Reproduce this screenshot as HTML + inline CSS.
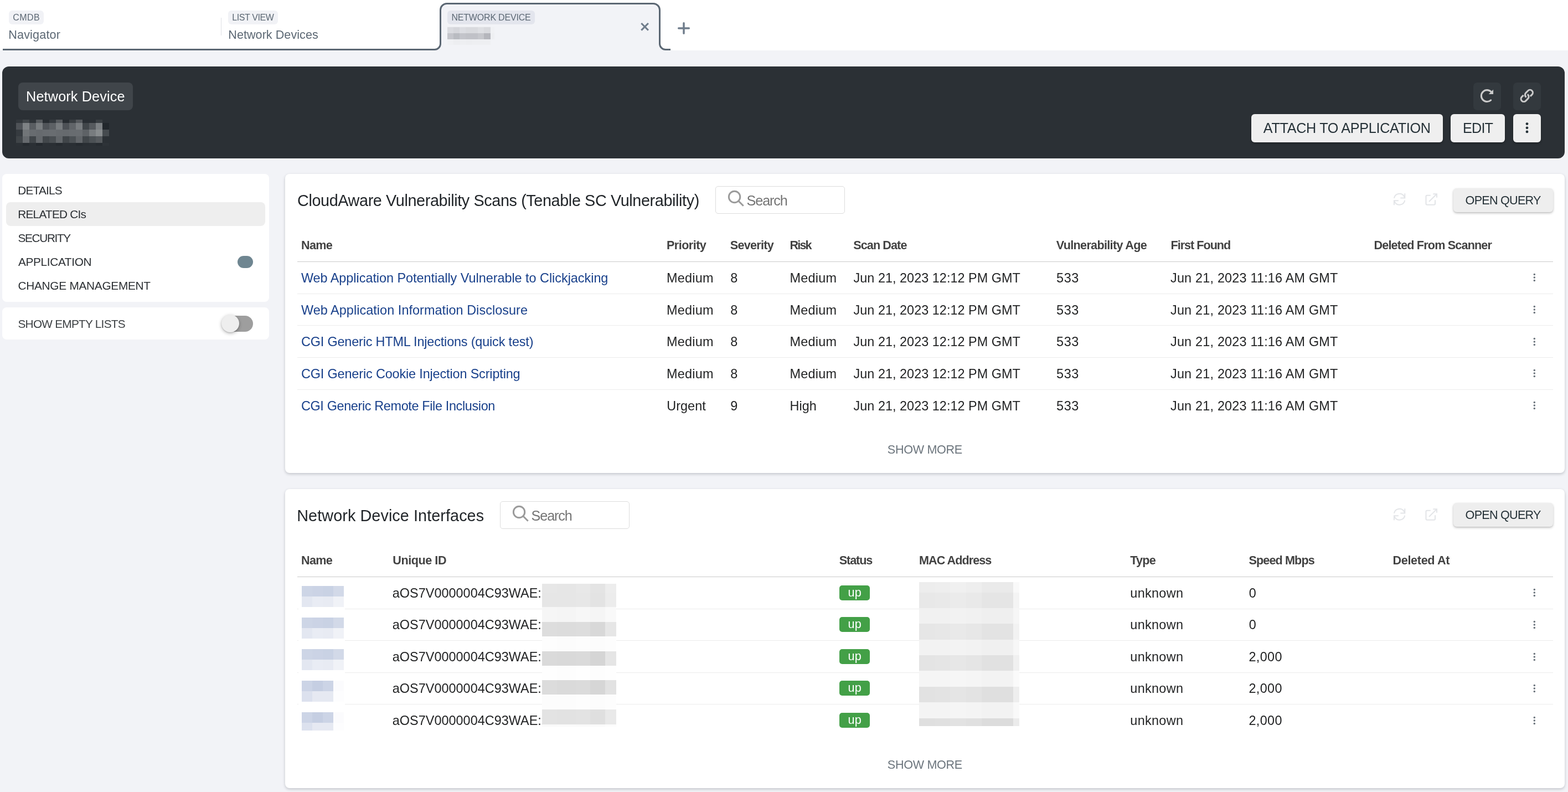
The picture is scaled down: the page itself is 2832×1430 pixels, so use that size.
<!DOCTYPE html>
<html lang="en"><head><meta charset="utf-8"><title>Network Device</title>
<style>
html,body{margin:0;padding:0}
body{width:2832px;height:1430px;overflow:hidden;background:#f2f3f7;font-family:"Liberation Sans",sans-serif;position:relative}
#page div,#page svg.abs,.abs{position:absolute}
#page{position:absolute;left:0;top:0;width:2832px;height:1430px;overflow:hidden;will-change:transform}
.t{position:absolute;white-space:nowrap;line-height:1;display:block}
.card{box-shadow:0 2px 5px rgba(40,44,60,.24)}
</style></head>
<body><main id="page">
<nav class="abs" id="tabs"><div style="left:0px;top:0px;width:2832px;height:91px;background:#fff"></div>
<svg class="abs" style="left:0;top:0" width="1300" height="100" viewBox="0 0 1300 100">
<path d="M785 92 L785 89.5 A10.5 10.5 0 0 0 795.5 79 L795.5 18 A11.5 11.5 0 0 1 807 6.5 L1180 6.5 A11.5 11.5 0 0 1 1191.5 18 L1191.5 79 A10.5 10.5 0 0 0 1202 89.5 L1202 92 Z" fill="#f2f3f7"/>
<path d="M5 89.5 L785 89.5 A10.5 10.5 0 0 0 795.5 79 L795.5 18 A11.5 11.5 0 0 1 807 6.5 L1180 6.5 A11.5 11.5 0 0 1 1191.5 18 L1191.5 79 A10.5 10.5 0 0 0 1202 89.5 L1211 89.5" fill="none" stroke="#5b6773" stroke-width="3"/>
<path d="M1158.3 42 L1170.9 54.6 M1170.9 42 L1158.3 54.6" stroke="#707d8c" stroke-width="3.1" fill="none"/>
<path d="M1225.7 51 L1244.3 51 M1235 41.8 L1235 60.2" stroke="#707d8c" stroke-width="3.5" stroke-linecap="round" fill="none"/>
</svg>
<div style="left:399px;top:32px;width:1px;height:32px;background:#dfe1e6"></div>
<div style="left:16px;top:19px;width:63px;height:25px;background:#f1f2f6;border-radius:6px"></div>
<span class="t" style="left:23.30px;top:24px;font-size:16px;color:#5c6874;letter-spacing:0.417px;">CMDB</span>
<span class="t" style="left:15.25px;top:52px;font-size:21.6px;color:#5c6874;letter-spacing:0.156px;">Navigator</span>
<div style="left:412px;top:19px;width:90px;height:25px;background:#f1f2f6;border-radius:6px"></div>
<span class="t" style="left:419.25px;top:24px;font-size:16px;color:#5c6874;letter-spacing:-0.406px;">LIST VIEW</span>
<span class="t" style="left:412.25px;top:52px;font-size:21.6px;color:#5c6874;letter-spacing:0.036px;">Network Devices</span>
<div style="left:808px;top:19px;width:158px;height:25px;background:#e3e5ed;border-radius:6px"></div>
<span class="t" style="left:815.45px;top:24px;font-size:16px;color:#5c6874;letter-spacing:-0.192px;">NETWORK DEVICE</span>
<svg class="abs" style="left:808.3px;top:47px" width="86" height="35" shape-rendering="crispEdges"><rect x="0.00" y="0.00" width="11.20" height="2.50" fill="#f0f1f4"/><rect x="10.90" y="0.00" width="11.50" height="2.50" fill="#f0f1f4"/><rect x="22.10" y="0.00" width="11.40" height="2.50" fill="#f0f1f4"/><rect x="33.20" y="0.00" width="11.10" height="2.50" fill="#f0f1f4"/><rect x="44.00" y="0.00" width="11.00" height="2.50" fill="#f0f1f4"/><rect x="54.70" y="0.00" width="11.90" height="2.50" fill="#f0f1f4"/><rect x="66.30" y="0.00" width="11.50" height="2.50" fill="#f0f1f4"/><rect x="0.00" y="2.20" width="11.20" height="11.10" fill="#dadbe0"/><rect x="10.90" y="2.20" width="11.50" height="11.10" fill="#d5d6db"/><rect x="22.10" y="2.20" width="11.40" height="11.10" fill="#dcdde2"/><rect x="33.20" y="2.20" width="11.10" height="11.10" fill="#d9dade"/><rect x="44.00" y="2.20" width="11.00" height="11.10" fill="#d9dade"/><rect x="54.70" y="2.20" width="11.90" height="11.10" fill="#dedfe3"/><rect x="66.30" y="2.20" width="11.50" height="11.10" fill="#d9dade"/><rect x="77.50" y="2.20" width="7.50" height="11.10" fill="#f0f1f4"/><rect x="0.00" y="13.00" width="11.20" height="11.10" fill="#c4c5cb"/><rect x="10.90" y="13.00" width="11.50" height="11.10" fill="#b9bbc1"/><rect x="22.10" y="13.00" width="11.40" height="11.10" fill="#c3c4ca"/><rect x="33.20" y="13.00" width="11.10" height="11.10" fill="#c0c1c7"/><rect x="44.00" y="13.00" width="11.00" height="11.10" fill="#c0c1c7"/><rect x="54.70" y="13.00" width="11.90" height="11.10" fill="#c6c7cc"/><rect x="66.30" y="13.00" width="11.50" height="11.10" fill="#b5b6bc"/><rect x="77.50" y="13.00" width="7.50" height="11.10" fill="#eeeff2"/><rect x="0.00" y="23.80" width="11.20" height="10.30" fill="#f0f1f4"/><rect x="10.90" y="23.80" width="11.50" height="10.30" fill="#edeef1"/><rect x="22.10" y="23.80" width="11.40" height="10.30" fill="#eeeff2"/><rect x="33.20" y="23.80" width="11.10" height="10.30" fill="#edeef1"/><rect x="44.00" y="23.80" width="11.00" height="10.30" fill="#eeeff2"/><rect x="54.70" y="23.80" width="11.90" height="10.30" fill="#eeeff2"/><rect x="66.30" y="23.80" width="11.50" height="10.30" fill="#eeeff2"/></svg></nav>
<header class="abs" id="header"><div style="left:4px;top:120px;width:2822px;height:166px;background:#2b3035;border-radius:12px"></div>
<div style="left:33px;top:149px;width:207px;height:50px;background:#40454a;border-radius:8px"></div>
<span class="t" style="left:47.10px;top:162px;font-size:25.2px;color:#fff;letter-spacing:0.162px;">Network Device</span>
<svg class="abs" style="left:29px;top:216px" width="169" height="48" shape-rendering="crispEdges"><rect x="0.00" y="0.00" width="12.30" height="6.30" fill="#32373c"/><rect x="12.00" y="0.00" width="12.30" height="6.30" fill="#42474b"/><rect x="24.00" y="0.00" width="12.30" height="6.30" fill="#2f3439"/><rect x="36.00" y="0.00" width="12.30" height="6.30" fill="#575b5f"/><rect x="48.00" y="0.00" width="12.30" height="6.30" fill="#282d32"/><rect x="60.00" y="0.00" width="12.30" height="6.30" fill="#353a3f"/><rect x="72.00" y="0.00" width="12.30" height="6.30" fill="#565a5e"/><rect x="84.00" y="0.00" width="12.30" height="6.30" fill="#272c31"/><rect x="96.00" y="0.00" width="12.30" height="6.30" fill="#3a3f43"/><rect x="108.00" y="0.00" width="12.30" height="6.30" fill="#55595d"/><rect x="120.00" y="0.00" width="12.30" height="6.30" fill="#292e33"/><rect x="132.00" y="0.00" width="12.30" height="6.30" fill="#2a2f34"/><rect x="144.00" y="0.00" width="12.30" height="6.30" fill="#393e42"/><rect x="0.00" y="6.00" width="12.30" height="12.30" fill="#4e5257"/><rect x="12.00" y="6.00" width="12.30" height="12.30" fill="#7e8285"/><rect x="24.00" y="6.00" width="12.30" height="12.30" fill="#5a5e62"/><rect x="36.00" y="6.00" width="12.30" height="12.30" fill="#797d80"/><rect x="48.00" y="6.00" width="12.30" height="12.30" fill="#505459"/><rect x="60.00" y="6.00" width="12.30" height="12.30" fill="#5d6165"/><rect x="72.00" y="6.00" width="12.30" height="12.30" fill="#787c7f"/><rect x="84.00" y="6.00" width="12.30" height="12.30" fill="#4d5156"/><rect x="96.00" y="6.00" width="12.30" height="12.30" fill="#616569"/><rect x="108.00" y="6.00" width="12.30" height="12.30" fill="#797d80"/><rect x="120.00" y="6.00" width="12.30" height="12.30" fill="#41464a"/><rect x="132.00" y="6.00" width="12.30" height="12.30" fill="#565a5e"/><rect x="144.00" y="6.00" width="12.30" height="12.30" fill="#7c8083"/><rect x="156.00" y="6.00" width="12.30" height="12.30" fill="#22272c"/><rect x="0.00" y="18.00" width="12.30" height="12.30" fill="#363b40"/><rect x="12.00" y="18.00" width="12.30" height="12.30" fill="#717578"/><rect x="24.00" y="18.00" width="12.30" height="12.30" fill="#686c70"/><rect x="36.00" y="18.00" width="12.30" height="12.30" fill="#666a6e"/><rect x="48.00" y="18.00" width="12.30" height="12.30" fill="#686c70"/><rect x="60.00" y="18.00" width="12.30" height="12.30" fill="#696d71"/><rect x="72.00" y="18.00" width="12.30" height="12.30" fill="#676b6f"/><rect x="84.00" y="18.00" width="12.30" height="12.30" fill="#666a6e"/><rect x="96.00" y="18.00" width="12.30" height="12.30" fill="#686c70"/><rect x="108.00" y="18.00" width="12.30" height="12.30" fill="#696d71"/><rect x="120.00" y="18.00" width="12.30" height="12.30" fill="#5e6266"/><rect x="132.00" y="18.00" width="12.30" height="12.30" fill="#787c7f"/><rect x="144.00" y="18.00" width="12.30" height="12.30" fill="#888c8e"/><rect x="156.00" y="18.00" width="12.30" height="12.30" fill="#464b4f"/><rect x="0.00" y="30.00" width="12.30" height="12.30" fill="#3f4448"/><rect x="12.00" y="30.00" width="12.30" height="12.30" fill="#666a6e"/><rect x="24.00" y="30.00" width="12.30" height="12.30" fill="#404549"/><rect x="36.00" y="30.00" width="12.30" height="12.30" fill="#64686c"/><rect x="48.00" y="30.00" width="12.30" height="12.30" fill="#42474b"/><rect x="60.00" y="30.00" width="12.30" height="12.30" fill="#4a4f53"/><rect x="72.00" y="30.00" width="12.30" height="12.30" fill="#62666a"/><rect x="84.00" y="30.00" width="12.30" height="12.30" fill="#404549"/><rect x="96.00" y="30.00" width="12.30" height="12.30" fill="#4c5155"/><rect x="108.00" y="30.00" width="12.30" height="12.30" fill="#616569"/><rect x="120.00" y="30.00" width="12.30" height="12.30" fill="#41464a"/><rect x="132.00" y="30.00" width="12.30" height="12.30" fill="#4c5155"/><rect x="144.00" y="30.00" width="12.30" height="12.30" fill="#565a5e"/><rect x="0.00" y="42.00" width="12.30" height="5.30" fill="#2c3136"/><rect x="12.00" y="42.00" width="12.30" height="5.30" fill="#252a2f"/><rect x="36.00" y="42.00" width="12.30" height="5.30" fill="#24292e"/><rect x="60.00" y="42.00" width="12.30" height="5.30" fill="#2a2f34"/><rect x="72.00" y="42.00" width="12.30" height="5.30" fill="#252a2f"/><rect x="96.00" y="42.00" width="12.30" height="5.30" fill="#2a2f34"/><rect x="108.00" y="42.00" width="12.30" height="5.30" fill="#252a2f"/><rect x="120.00" y="42.00" width="12.30" height="5.30" fill="#292e33"/><rect x="132.00" y="42.00" width="12.30" height="5.30" fill="#2a2f34"/><rect x="144.00" y="42.00" width="12.30" height="5.30" fill="#262b30"/><rect x="156.00" y="42.00" width="12.30" height="5.30" fill="#2e3338"/></svg>
<div style="left:2661px;top:149px;width:50px;height:50px;background:#33393e;border-radius:7px"></div>
<div style="left:2733px;top:149px;width:50px;height:50px;background:#33393e;border-radius:7px"></div>
<svg class="abs" style="left:2661px;top:149px" width="50" height="50" viewBox="0 0 50 50">
<g transform="translate(24.76 24.06)"><path d="M7.35 -7.35 A10.4 10.4 0 1 0 6.9 7.8" fill="none" stroke="#cbcbcb" stroke-width="3.1" stroke-linecap="round"/>
<path d="M11.3 -11.4 L11.3 -3 L3 -3 Z" fill="#cbcbcb"/></g></svg>
<svg class="abs" style="left:2733px;top:149px" width="50" height="50" viewBox="0 0 50 50">
<g transform="translate(24.75 23.9) rotate(-45)" fill="none" stroke="#cbcbcb" stroke-width="3.1"><path d="M3.6 5.05 L7.9 5.05 A5.05 5.05 0 0 0 7.9 -5.05 L2.45 -5.05 A5.05 5.05 0 0 0 -2.5 1.1"/><path d="M3.6 5.05 L7.9 5.05 A5.05 5.05 0 0 0 7.9 -5.05 L2.45 -5.05 A5.05 5.05 0 0 0 -2.5 1.1" transform="rotate(180)"/></g></svg>
<div style="left:2260px;top:206px;width:346px;height:51px;background:#efefef;border-radius:6px;box-shadow:0 2px 4px rgba(0,0,0,.3)"></div>
<span class="t" style="left:2281.80px;top:219px;font-size:25.2px;color:#263238;letter-spacing:-0.312px;">ATTACH TO APPLICATION</span>
<div style="left:2620px;top:206px;width:98px;height:51px;background:#efefef;border-radius:6px;box-shadow:0 2px 4px rgba(0,0,0,.3)"></div>
<span class="t" style="left:2642.10px;top:219px;font-size:25.2px;color:#263238;letter-spacing:-0.850px;">EDIT</span>
<div style="left:2733px;top:206px;width:50px;height:51px;background:#efefef;border-radius:6px;box-shadow:0 2px 4px rgba(0,0,0,.3)"></div>
<svg class="abs" style="left:2733px;top:206px" width="50" height="51"><g fill="#263238"><circle cx="25" cy="17.6" r="2.4"/><circle cx="25" cy="24.8" r="2.4"/><circle cx="25" cy="31.9" r="2.4"/></g></svg></header>
<aside class="abs" id="sidebar"><div class="scard" style="left:4px;top:314px;width:482px;height:231px;background:#fff;border-radius:8px"></div>
<div style="left:11px;top:365px;width:468px;height:43px;background:#eeeeee;border-radius:8px"></div>
<span class="t" style="left:32.25px;top:334px;font-size:20.8px;color:#2b2f33;letter-spacing:-0.800px;">DETAILS</span>
<span class="t" style="left:32.25px;top:377px;font-size:20.8px;color:#2b2f33;letter-spacing:-0.770px;">RELATED CIs</span>
<span class="t" style="left:32.50px;top:420px;font-size:20.8px;color:#2b2f33;letter-spacing:-1.350px;">SECURITY</span>
<span class="t" style="left:33.00px;top:463px;font-size:20.8px;color:#2b2f33;letter-spacing:-0.350px;">APPLICATION</span>
<span class="t" style="left:32.50px;top:506px;font-size:20.8px;color:#2b2f33;letter-spacing:-0.266px;">CHANGE MANAGEMENT</span>
<div style="left:429px;top:462px;width:28px;height:22px;background:#6f8691;border-radius:11px"></div>
<div class="scard" style="left:4px;top:555px;width:482px;height:58px;background:#fff;border-radius:8px"></div>
<span class="t" style="left:32.50px;top:575px;font-size:20.8px;color:#3c4043;letter-spacing:-0.747px;">SHOW EMPTY LISTS</span>
<div style="left:409px;top:570px;width:48px;height:29px;background:#9e9e9e;border-radius:14.5px"></div>
<div style="left:400px;top:568px;width:32px;height:32px;background:#eeeeee;border-radius:50%;box-shadow:0 2px 6px rgba(0,0,0,.28), 0 1px 2px rgba(0,0,0,.15)"></div></aside>
<section class="abs" id="card1"><div class="card" style="left:515px;top:314px;width:2311px;height:540px;background:#fff;border-radius:8px"></div>
<span class="t" style="left:537.00px;top:348px;font-size:28.8px;color:#212529;letter-spacing:-0.388px;">CloudAware Vulnerability Scans (Tenable SC Vulnerability)</span>
<div style="left:1292px;top:336px;width:234px;height:50px;border:1px solid #dcdcdc;border-radius:5px;box-sizing:border-box;background:#fff"></div>
<svg class="abs" style="left:1312px;top:339px" width="40" height="40"><g fill="none" stroke="#9b9b9b" stroke-width="3"><circle cx="14.55" cy="16.5" r="10.2"/><path d="M21.7 23.7 L30.7 32.7"/></g></svg>
<span class="t" style="left:1348.55px;top:350px;font-size:25.2px;color:#757575;letter-spacing:-1.100px;">Search</span>
<svg class="abs" style="left:2510px;top:340px" width="36" height="36"><g transform="translate(17.6 19.8)" fill="none" stroke="#e3e5e8" stroke-width="2">
<path d="M-9.7 -1.9 A9.9 9.9 0 0 1 8.3 -5.4 L9.7 -2.3 M9.7 -10.5 L9.7 -2.4 L1.7 -2.4"/>
<path d="M9.7 1.9 A9.9 9.9 0 0 1 -8.3 5.4 L-9.7 2.3 M-9.7 10.5 L-9.7 2.4 L-1.7 2.4"/></g></svg>
<svg class="abs" style="left:2570px;top:346px" width="36" height="36"><g fill="none" stroke="#e3e5e8" stroke-width="2.1">
<path d="M13.8 6.8 L7.5 6.8 A2 2 0 0 0 5.5 8.8 L5.5 21.8 A2 2 0 0 0 7.5 23.8 L20 23.8 A2 2 0 0 0 22 21.8 L22 15.2"/>
<path d="M11 18 L25 4.2 M18.3 4.2 L25 4.2 L25 10.8"/></g></svg>
<div style="left:2625px;top:340px;width:180px;height:43px;background:#eeeeee;border-radius:6px;box-shadow:0 2px 4px rgba(0,0,0,.22), 0 1px 2px rgba(0,0,0,.08)"></div>
<span class="t" style="left:2646.60px;top:351px;font-size:21.6px;color:#263238;letter-spacing:-0.750px;">OPEN QUERY</span>
<span class="t" style="left:544.00px;top:432px;font-size:21.6px;color:#424242;letter-spacing:-0.667px;font-weight:700;">Name</span>
<span class="t" style="left:1204.00px;top:432px;font-size:21.6px;color:#424242;letter-spacing:-0.536px;font-weight:700;">Priority</span>
<span class="t" style="left:1318.75px;top:432px;font-size:21.6px;color:#424242;letter-spacing:-0.714px;font-weight:700;">Severity</span>
<span class="t" style="left:1426.50px;top:432px;font-size:21.6px;color:#424242;letter-spacing:-1.833px;font-weight:700;">Risk</span>
<span class="t" style="left:1541.25px;top:432px;font-size:21.6px;color:#424242;letter-spacing:-0.906px;font-weight:700;">Scan Date</span>
<span class="t" style="left:1907.75px;top:432px;font-size:21.6px;color:#424242;letter-spacing:-0.672px;font-weight:700;">Vulnerability Age</span>
<span class="t" style="left:2114.50px;top:432px;font-size:21.6px;color:#424242;letter-spacing:-1.000px;font-weight:700;">First Found</span>
<span class="t" style="left:2481.50px;top:432px;font-size:21.6px;color:#424242;letter-spacing:-0.829px;font-weight:700;">Deleted From Scanner</span>
<div style="left:537px;top:472px;width:2268px;height:1px;background:#cacaca"></div>
<span class="t" style="left:543.95px;top:491px;font-size:23.4px;color:#173f8a;letter-spacing:-0.014px;">Web Application Potentially Vulnerable to Clickjacking</span>
<span class="t" style="left:1204.00px;top:491px;font-size:23.4px;color:#222324;letter-spacing:0.250px;">Medium</span>
<span class="t" style="left:1319.30px;top:491px;font-size:23.4px;color:#222324;">8</span>
<span class="t" style="left:1426.50px;top:491px;font-size:23.4px;color:#222324;letter-spacing:0.250px;">Medium</span>
<span class="t" style="left:1541.50px;top:491px;font-size:23.4px;color:#222324;letter-spacing:0.042px;">Jun 21, 2023 12:12 PM GMT</span>
<span class="t" style="left:1908.00px;top:491px;font-size:23.4px;color:#222324;letter-spacing:0.625px;">533</span>
<span class="t" style="left:2114.00px;top:491px;font-size:23.4px;color:#222324;letter-spacing:0.208px;">Jun 21, 2023 11:16 AM GMT</span>
<svg class="abs" style="left:2762px;top:492.3px" width="18" height="18"><g fill="#6c757d"><circle cx="9.3" cy="3.5" r="1.75"/><circle cx="9.3" cy="9" r="1.75"/><circle cx="9.3" cy="14.5" r="1.75"/></g></svg>
<div style="left:537px;top:530px;width:2268px;height:1px;background:#ececec"></div>
<span class="t" style="left:543.95px;top:549px;font-size:23.4px;color:#173f8a;letter-spacing:0.068px;">Web Application Information Disclosure</span>
<span class="t" style="left:1204.00px;top:549px;font-size:23.4px;color:#222324;letter-spacing:0.250px;">Medium</span>
<span class="t" style="left:1319.30px;top:549px;font-size:23.4px;color:#222324;">8</span>
<span class="t" style="left:1426.50px;top:549px;font-size:23.4px;color:#222324;letter-spacing:0.250px;">Medium</span>
<span class="t" style="left:1541.50px;top:549px;font-size:23.4px;color:#222324;letter-spacing:0.042px;">Jun 21, 2023 12:12 PM GMT</span>
<span class="t" style="left:1908.00px;top:549px;font-size:23.4px;color:#222324;letter-spacing:0.625px;">533</span>
<span class="t" style="left:2114.00px;top:549px;font-size:23.4px;color:#222324;letter-spacing:0.208px;">Jun 21, 2023 11:16 AM GMT</span>
<svg class="abs" style="left:2762px;top:549.9px" width="18" height="18"><g fill="#6c757d"><circle cx="9.3" cy="3.5" r="1.75"/><circle cx="9.3" cy="9" r="1.75"/><circle cx="9.3" cy="14.5" r="1.75"/></g></svg>
<div style="left:537px;top:587px;width:2268px;height:1px;background:#ececec"></div>
<span class="t" style="left:543.95px;top:606px;font-size:23.4px;color:#173f8a;letter-spacing:-0.154px;">CGI Generic HTML Injections (quick test)</span>
<span class="t" style="left:1204.00px;top:606px;font-size:23.4px;color:#222324;letter-spacing:0.250px;">Medium</span>
<span class="t" style="left:1319.30px;top:606px;font-size:23.4px;color:#222324;">8</span>
<span class="t" style="left:1426.50px;top:606px;font-size:23.4px;color:#222324;letter-spacing:0.250px;">Medium</span>
<span class="t" style="left:1541.50px;top:606px;font-size:23.4px;color:#222324;letter-spacing:0.042px;">Jun 21, 2023 12:12 PM GMT</span>
<span class="t" style="left:1908.00px;top:606px;font-size:23.4px;color:#222324;letter-spacing:0.625px;">533</span>
<span class="t" style="left:2114.00px;top:606px;font-size:23.4px;color:#222324;letter-spacing:0.208px;">Jun 21, 2023 11:16 AM GMT</span>
<svg class="abs" style="left:2762px;top:607.5px" width="18" height="18"><g fill="#6c757d"><circle cx="9.3" cy="3.5" r="1.75"/><circle cx="9.3" cy="9" r="1.75"/><circle cx="9.3" cy="14.5" r="1.75"/></g></svg>
<div style="left:537px;top:645px;width:2268px;height:1px;background:#ececec"></div>
<span class="t" style="left:543.95px;top:664px;font-size:23.4px;color:#173f8a;letter-spacing:-0.128px;">CGI Generic Cookie Injection Scripting</span>
<span class="t" style="left:1204.00px;top:664px;font-size:23.4px;color:#222324;letter-spacing:0.250px;">Medium</span>
<span class="t" style="left:1319.30px;top:664px;font-size:23.4px;color:#222324;">8</span>
<span class="t" style="left:1426.50px;top:664px;font-size:23.4px;color:#222324;letter-spacing:0.250px;">Medium</span>
<span class="t" style="left:1541.50px;top:664px;font-size:23.4px;color:#222324;letter-spacing:0.042px;">Jun 21, 2023 12:12 PM GMT</span>
<span class="t" style="left:1908.00px;top:664px;font-size:23.4px;color:#222324;letter-spacing:0.625px;">533</span>
<span class="t" style="left:2114.00px;top:664px;font-size:23.4px;color:#222324;letter-spacing:0.208px;">Jun 21, 2023 11:16 AM GMT</span>
<svg class="abs" style="left:2762px;top:665.1px" width="18" height="18"><g fill="#6c757d"><circle cx="9.3" cy="3.5" r="1.75"/><circle cx="9.3" cy="9" r="1.75"/><circle cx="9.3" cy="14.5" r="1.75"/></g></svg>
<div style="left:537px;top:703px;width:2268px;height:1px;background:#ececec"></div>
<span class="t" style="left:543.95px;top:722px;font-size:23.4px;color:#173f8a;letter-spacing:-0.344px;">CGI Generic Remote File Inclusion</span>
<span class="t" style="left:1204.25px;top:722px;font-size:23.4px;color:#222324;letter-spacing:0.050px;">Urgent</span>
<span class="t" style="left:1319.30px;top:722px;font-size:23.4px;color:#222324;">9</span>
<span class="t" style="left:1426.50px;top:722px;font-size:23.4px;color:#222324;letter-spacing:0.083px;">High</span>
<span class="t" style="left:1541.50px;top:722px;font-size:23.4px;color:#222324;letter-spacing:0.042px;">Jun 21, 2023 12:12 PM GMT</span>
<span class="t" style="left:1908.00px;top:722px;font-size:23.4px;color:#222324;letter-spacing:0.625px;">533</span>
<span class="t" style="left:2114.00px;top:722px;font-size:23.4px;color:#222324;letter-spacing:0.208px;">Jun 21, 2023 11:16 AM GMT</span>
<svg class="abs" style="left:2762px;top:722.7px" width="18" height="18"><g fill="#6c757d"><circle cx="9.3" cy="3.5" r="1.75"/><circle cx="9.3" cy="9" r="1.75"/><circle cx="9.3" cy="14.5" r="1.75"/></g></svg>

<span class="t" style="left:1602.80px;top:801px;font-size:21.6px;color:#6c757d;letter-spacing:-0.312px;">SHOW MORE</span></section>
<section class="abs" id="card2"><div class="card" style="left:515px;top:883px;width:2311px;height:540px;background:#fff;border-radius:8px"></div>
<span class="t" style="left:536.25px;top:917px;font-size:28.8px;color:#212529;letter-spacing:0.073px;">Network Device Interfaces</span>
<div style="left:903px;top:905px;width:234px;height:50px;border:1px solid #dcdcdc;border-radius:5px;box-sizing:border-box;background:#fff"></div>
<svg class="abs" style="left:923px;top:908px" width="40" height="40"><g fill="none" stroke="#9b9b9b" stroke-width="3"><circle cx="14.55" cy="16.5" r="10.2"/><path d="M21.7 23.7 L30.7 32.7"/></g></svg>
<span class="t" style="left:959.55px;top:919px;font-size:25.2px;color:#757575;letter-spacing:-1.100px;">Search</span>
<svg class="abs" style="left:2510px;top:909px" width="36" height="36"><g transform="translate(17.6 19.8)" fill="none" stroke="#e3e5e8" stroke-width="2">
<path d="M-9.7 -1.9 A9.9 9.9 0 0 1 8.3 -5.4 L9.7 -2.3 M9.7 -10.5 L9.7 -2.4 L1.7 -2.4"/>
<path d="M9.7 1.9 A9.9 9.9 0 0 1 -8.3 5.4 L-9.7 2.3 M-9.7 10.5 L-9.7 2.4 L-1.7 2.4"/></g></svg>
<svg class="abs" style="left:2570px;top:915px" width="36" height="36"><g fill="none" stroke="#e3e5e8" stroke-width="2.1">
<path d="M13.8 6.8 L7.5 6.8 A2 2 0 0 0 5.5 8.8 L5.5 21.8 A2 2 0 0 0 7.5 23.8 L20 23.8 A2 2 0 0 0 22 21.8 L22 15.2"/>
<path d="M11 18 L25 4.2 M18.3 4.2 L25 4.2 L25 10.8"/></g></svg>
<div style="left:2625px;top:908px;width:180px;height:43px;background:#eeeeee;border-radius:6px;box-shadow:0 2px 4px rgba(0,0,0,.22), 0 1px 2px rgba(0,0,0,.08)"></div>
<span class="t" style="left:2646.60px;top:919px;font-size:21.6px;color:#263238;letter-spacing:-0.750px;">OPEN QUERY</span>
<span class="t" style="left:544.00px;top:1001px;font-size:21.6px;color:#424242;letter-spacing:-0.667px;font-weight:700;">Name</span>
<span class="t" style="left:709.25px;top:1001px;font-size:21.6px;color:#424242;letter-spacing:-0.438px;font-weight:700;">Unique ID</span>
<span class="t" style="left:1515.75px;top:1001px;font-size:21.6px;color:#424242;letter-spacing:-1.100px;font-weight:700;">Status</span>
<span class="t" style="left:1660.00px;top:1001px;font-size:21.6px;color:#424242;letter-spacing:-0.950px;font-weight:700;">MAC Address</span>
<span class="t" style="left:2041.25px;top:1001px;font-size:21.6px;color:#424242;letter-spacing:-0.750px;font-weight:700;">Type</span>
<span class="t" style="left:2255.55px;top:1001px;font-size:21.6px;color:#424242;letter-spacing:-0.889px;font-weight:700;">Speed Mbps</span>
<span class="t" style="left:2515.50px;top:1001px;font-size:21.6px;color:#424242;letter-spacing:-0.333px;font-weight:700;">Deleted At</span>
<div style="left:537px;top:1041px;width:2268px;height:1px;background:#cacaca"></div>
<span class="t" style="left:708.80px;top:1060px;font-size:23.4px;color:#222324;letter-spacing:0.042px;">aOS7V0000004C93WAE:</span>
<span class="t" style="left:2041.30px;top:1060px;font-size:23.4px;color:#222324;letter-spacing:0.333px;">unknown</span>
<span class="t" style="left:2255.70px;top:1060px;font-size:23.4px;color:#222324;">0</span>
<svg class="abs" style="left:2762px;top:1061.3px" width="18" height="18"><g fill="#6c757d"><circle cx="9.3" cy="3.5" r="1.75"/><circle cx="9.3" cy="9" r="1.75"/><circle cx="9.3" cy="14.5" r="1.75"/></g></svg>
<div style="left:537px;top:1099px;width:2268px;height:1px;background:#ececec"></div>
<span class="t" style="left:708.80px;top:1117px;font-size:23.4px;color:#222324;letter-spacing:0.042px;">aOS7V0000004C93WAE:</span>
<span class="t" style="left:2041.30px;top:1117px;font-size:23.4px;color:#222324;letter-spacing:0.333px;">unknown</span>
<span class="t" style="left:2255.70px;top:1117px;font-size:23.4px;color:#222324;">0</span>
<svg class="abs" style="left:2762px;top:1118.9px" width="18" height="18"><g fill="#6c757d"><circle cx="9.3" cy="3.5" r="1.75"/><circle cx="9.3" cy="9" r="1.75"/><circle cx="9.3" cy="14.5" r="1.75"/></g></svg>
<div style="left:537px;top:1156px;width:2268px;height:1px;background:#ececec"></div>
<span class="t" style="left:708.80px;top:1175px;font-size:23.4px;color:#222324;letter-spacing:0.042px;">aOS7V0000004C93WAE:</span>
<span class="t" style="left:2041.30px;top:1175px;font-size:23.4px;color:#222324;letter-spacing:0.333px;">unknown</span>
<span class="t" style="left:2255.45px;top:1175px;font-size:23.4px;color:#222324;letter-spacing:0.375px;">2,000</span>
<svg class="abs" style="left:2762px;top:1176.5px" width="18" height="18"><g fill="#6c757d"><circle cx="9.3" cy="3.5" r="1.75"/><circle cx="9.3" cy="9" r="1.75"/><circle cx="9.3" cy="14.5" r="1.75"/></g></svg>
<div style="left:537px;top:1214px;width:2268px;height:1px;background:#ececec"></div>
<span class="t" style="left:708.80px;top:1232px;font-size:23.4px;color:#222324;letter-spacing:0.042px;">aOS7V0000004C93WAE:</span>
<span class="t" style="left:2041.30px;top:1232px;font-size:23.4px;color:#222324;letter-spacing:0.333px;">unknown</span>
<span class="t" style="left:2255.45px;top:1232px;font-size:23.4px;color:#222324;letter-spacing:0.375px;">2,000</span>
<svg class="abs" style="left:2762px;top:1234.1px" width="18" height="18"><g fill="#6c757d"><circle cx="9.3" cy="3.5" r="1.75"/><circle cx="9.3" cy="9" r="1.75"/><circle cx="9.3" cy="14.5" r="1.75"/></g></svg>
<div style="left:537px;top:1271px;width:2268px;height:1px;background:#ececec"></div>
<span class="t" style="left:708.80px;top:1290px;font-size:23.4px;color:#222324;letter-spacing:0.042px;">aOS7V0000004C93WAE:</span>
<span class="t" style="left:2041.30px;top:1290px;font-size:23.4px;color:#222324;letter-spacing:0.333px;">unknown</span>
<span class="t" style="left:2255.45px;top:1290px;font-size:23.4px;color:#222324;letter-spacing:0.375px;">2,000</span>
<svg class="abs" style="left:2762px;top:1291.7px" width="18" height="18"><g fill="#6c757d"><circle cx="9.3" cy="3.5" r="1.75"/><circle cx="9.3" cy="9" r="1.75"/><circle cx="9.3" cy="14.5" r="1.75"/></g></svg>
<div style="left:1516px;top:1057px;width:55px;height:27px;background:#43a047;border-radius:5px"></div>
<span class="t" style="left:1531.50px;top:1059px;font-size:21.6px;color:#fff;letter-spacing:0.250px;">up</span>
<div style="left:1516px;top:1114px;width:55px;height:27px;background:#43a047;border-radius:5px"></div>
<span class="t" style="left:1531.50px;top:1116px;font-size:21.6px;color:#fff;letter-spacing:0.250px;">up</span>
<div style="left:1516px;top:1172px;width:55px;height:27px;background:#43a047;border-radius:5px"></div>
<span class="t" style="left:1531.50px;top:1174px;font-size:21.6px;color:#fff;letter-spacing:0.250px;">up</span>
<div style="left:1516px;top:1229px;width:55px;height:27px;background:#43a047;border-radius:5px"></div>
<span class="t" style="left:1531.50px;top:1231px;font-size:21.6px;color:#fff;letter-spacing:0.250px;">up</span>
<div style="left:1516px;top:1287px;width:55px;height:27px;background:#43a047;border-radius:5px"></div>
<span class="t" style="left:1531.50px;top:1289px;font-size:21.6px;color:#fff;letter-spacing:0.250px;">up</span>
<div style="left:539px;top:1043px;width:84px;height:280px;background:#fff"></div>
<svg class="abs" style="left:545px;top:1058px" width="96" height="39" shape-rendering="crispEdges"><rect x="0.00" y="0.00" width="19.30" height="19.30" fill="#cdd5e6"/><rect x="19.00" y="0.00" width="19.30" height="19.30" fill="#cbd3e5"/><rect x="38.00" y="0.00" width="19.30" height="19.30" fill="#c9d2e4"/><rect x="57.00" y="0.00" width="19.30" height="19.30" fill="#d2d9e8"/><rect x="0.00" y="19.00" width="19.30" height="19.30" fill="#e3e7f1"/><rect x="19.00" y="19.00" width="19.30" height="19.30" fill="#e9ecf4"/><rect x="38.00" y="19.00" width="19.30" height="19.30" fill="#e8ebf3"/><rect x="57.00" y="19.00" width="19.30" height="19.30" fill="#f0f2f7"/></svg>
<svg class="abs" style="left:545px;top:1115px" width="96" height="39" shape-rendering="crispEdges"><rect x="0.00" y="0.00" width="19.30" height="19.30" fill="#cdd5e6"/><rect x="19.00" y="0.00" width="19.30" height="19.30" fill="#cbd3e5"/><rect x="38.00" y="0.00" width="19.30" height="19.30" fill="#c9d2e4"/><rect x="57.00" y="0.00" width="19.30" height="19.30" fill="#d2d9e8"/><rect x="0.00" y="19.00" width="19.30" height="19.30" fill="#e3e7f1"/><rect x="19.00" y="19.00" width="19.30" height="19.30" fill="#e9ecf4"/><rect x="38.00" y="19.00" width="19.30" height="19.30" fill="#e8ebf3"/><rect x="57.00" y="19.00" width="19.30" height="19.30" fill="#f0f2f7"/></svg>
<svg class="abs" style="left:545px;top:1172px" width="96" height="39" shape-rendering="crispEdges"><rect x="0.00" y="0.00" width="19.30" height="19.30" fill="#cdd5e6"/><rect x="19.00" y="0.00" width="19.30" height="19.30" fill="#cbd3e5"/><rect x="38.00" y="0.00" width="19.30" height="19.30" fill="#c9d2e4"/><rect x="57.00" y="0.00" width="19.30" height="19.30" fill="#d2d9e8"/><rect x="0.00" y="19.00" width="19.30" height="19.30" fill="#e3e7f1"/><rect x="19.00" y="19.00" width="19.30" height="19.30" fill="#e9ecf4"/><rect x="38.00" y="19.00" width="19.30" height="19.30" fill="#e8ebf3"/><rect x="57.00" y="19.00" width="19.30" height="19.30" fill="#f0f2f7"/></svg>
<svg class="abs" style="left:545px;top:1229px" width="77" height="39" shape-rendering="crispEdges"><rect x="0.00" y="0.00" width="19.30" height="19.30" fill="#ccd4e6"/><rect x="19.00" y="0.00" width="19.30" height="19.30" fill="#c5cee2"/><rect x="38.00" y="0.00" width="19.30" height="19.30" fill="#ccd4e6"/><rect x="57.00" y="0.00" width="19.30" height="19.30" fill="#fbfbfd"/><rect x="0.00" y="19.00" width="19.30" height="19.30" fill="#dce1ee"/><rect x="19.00" y="19.00" width="19.30" height="19.30" fill="#e6e9f2"/><rect x="38.00" y="19.00" width="19.30" height="19.30" fill="#e6e9f2"/><rect x="57.00" y="19.00" width="19.30" height="19.30" fill="#fdfdfe"/></svg>
<svg class="abs" style="left:545px;top:1286px" width="77" height="34" shape-rendering="crispEdges"><rect x="0.00" y="0.00" width="19.30" height="19.30" fill="#ccd4e6"/><rect x="19.00" y="0.00" width="19.30" height="19.30" fill="#c5cee2"/><rect x="38.00" y="0.00" width="19.30" height="19.30" fill="#ccd4e6"/><rect x="57.00" y="0.00" width="19.30" height="19.30" fill="#fbfbfd"/><rect x="0.00" y="19.00" width="19.30" height="14.30" fill="#dce1ee"/><rect x="19.00" y="19.00" width="19.30" height="14.30" fill="#e6e9f2"/><rect x="38.00" y="19.00" width="19.30" height="14.30" fill="#e6e9f2"/><rect x="57.00" y="19.00" width="19.30" height="14.30" fill="#fdfdfe"/></svg>
<svg class="abs" style="left:979px;top:1054px" width="135" height="259" shape-rendering="crispEdges"><rect x="0.00" y="0.00" width="26.80" height="16.30" fill="#e7e7e7"/><rect x="26.50" y="0.00" width="34.80" height="16.30" fill="#e6e6e6"/><rect x="61.00" y="0.00" width="26.30" height="16.30" fill="#e8e8e8"/><rect x="87.00" y="0.00" width="26.80" height="16.30" fill="#e4e4e4"/><rect x="113.50" y="0.00" width="20.80" height="16.30" fill="#ededed"/><rect x="0.00" y="16.00" width="26.80" height="26.30" fill="#e6e6e6"/><rect x="26.50" y="16.00" width="34.80" height="26.30" fill="#e6e6e6"/><rect x="61.00" y="16.00" width="26.30" height="26.30" fill="#e7e7e7"/><rect x="87.00" y="16.00" width="26.80" height="26.30" fill="#e3e3e3"/><rect x="113.50" y="16.00" width="20.80" height="26.30" fill="#ececec"/><rect x="0.00" y="42.00" width="26.80" height="27.30" fill="#f6f6f6"/><rect x="26.50" y="42.00" width="34.80" height="27.30" fill="#f5f5f5"/><rect x="61.00" y="42.00" width="26.30" height="27.30" fill="#f7f7f7"/><rect x="87.00" y="42.00" width="26.80" height="27.30" fill="#f5f5f5"/><rect x="113.50" y="42.00" width="20.80" height="27.30" fill="#f9f9f9"/><rect x="0.00" y="69.00" width="26.80" height="26.30" fill="#dddddd"/><rect x="26.50" y="69.00" width="34.80" height="26.30" fill="#dcdcdc"/><rect x="61.00" y="69.00" width="26.30" height="26.30" fill="#dddddd"/><rect x="87.00" y="69.00" width="26.80" height="26.30" fill="#d8d8d8"/><rect x="113.50" y="69.00" width="20.80" height="26.30" fill="#e6e6e6"/><rect x="0.00" y="95.00" width="26.80" height="26.80" fill="#fdfdfd"/><rect x="26.50" y="95.00" width="34.80" height="26.80" fill="#fcfcfc"/><rect x="61.00" y="95.00" width="26.30" height="26.80" fill="#fdfdfd"/><rect x="87.00" y="95.00" width="26.80" height="26.80" fill="#fcfcfc"/><rect x="113.50" y="95.00" width="20.80" height="26.80" fill="#fdfdfd"/><rect x="0.00" y="121.50" width="26.80" height="26.30" fill="#dadada"/><rect x="26.50" y="121.50" width="34.80" height="26.30" fill="#d9d9d9"/><rect x="61.00" y="121.50" width="26.30" height="26.30" fill="#dadada"/><rect x="87.00" y="121.50" width="26.80" height="26.30" fill="#d5d5d5"/><rect x="113.50" y="121.50" width="20.80" height="26.30" fill="#e5e5e5"/><rect x="0.00" y="147.50" width="26.80" height="26.80" fill="#fefefe"/><rect x="26.50" y="147.50" width="34.80" height="26.80" fill="#fdfdfd"/><rect x="61.00" y="147.50" width="26.30" height="26.80" fill="#fefefe"/><rect x="87.00" y="147.50" width="26.80" height="26.80" fill="#fdfdfd"/><rect x="113.50" y="147.50" width="20.80" height="26.80" fill="#fefefe"/><rect x="0.00" y="174.00" width="26.80" height="26.30" fill="#dcdcdc"/><rect x="26.50" y="174.00" width="34.80" height="26.30" fill="#dadada"/><rect x="61.00" y="174.00" width="26.30" height="26.30" fill="#dbdbdb"/><rect x="87.00" y="174.00" width="26.80" height="26.30" fill="#d6d6d6"/><rect x="113.50" y="174.00" width="20.80" height="26.30" fill="#e2e2e2"/><rect x="0.00" y="200.00" width="26.80" height="26.80" fill="#fcfcfc"/><rect x="26.50" y="200.00" width="34.80" height="26.80" fill="#fcfcfc"/><rect x="61.00" y="200.00" width="26.30" height="26.80" fill="#fdfdfd"/><rect x="87.00" y="200.00" width="26.80" height="26.80" fill="#fcfcfc"/><rect x="113.50" y="200.00" width="20.80" height="26.80" fill="#fdfdfd"/><rect x="0.00" y="226.50" width="26.80" height="27.80" fill="#e3e3e3"/><rect x="26.50" y="226.50" width="34.80" height="27.80" fill="#e2e2e2"/><rect x="61.00" y="226.50" width="26.30" height="27.80" fill="#e3e3e3"/><rect x="87.00" y="226.50" width="26.80" height="27.80" fill="#dfdfdf"/><rect x="113.50" y="226.50" width="20.80" height="27.80" fill="#e9e9e9"/><rect x="0.00" y="254.00" width="26.80" height="4.30" fill="#fafafa"/><rect x="26.50" y="254.00" width="34.80" height="4.30" fill="#fafafa"/><rect x="61.00" y="254.00" width="26.30" height="4.30" fill="#fafafa"/><rect x="87.00" y="254.00" width="26.80" height="4.30" fill="#fafafa"/><rect x="113.50" y="254.00" width="20.80" height="4.30" fill="#fcfcfc"/></svg>
<svg class="abs" style="left:1660px;top:1051px" width="182" height="261" shape-rendering="crispEdges"><rect x="0.00" y="0.00" width="29.05" height="18.80" fill="#ededed"/><rect x="28.75" y="0.00" width="27.80" height="18.80" fill="#eeeeee"/><rect x="56.25" y="0.00" width="29.05" height="18.80" fill="#f0f0f0"/><rect x="85.00" y="0.00" width="28.30" height="18.80" fill="#eeeeee"/><rect x="113.00" y="0.00" width="28.55" height="18.80" fill="#eaeaea"/><rect x="141.25" y="0.00" width="28.55" height="18.80" fill="#eaeaea"/><rect x="169.50" y="0.00" width="11.80" height="18.80" fill="#f9f9f9"/><rect x="0.00" y="18.50" width="29.05" height="28.30" fill="#e8e8e8"/><rect x="28.75" y="18.50" width="27.80" height="28.30" fill="#e9e9e9"/><rect x="56.25" y="18.50" width="29.05" height="28.30" fill="#ebebeb"/><rect x="85.00" y="18.50" width="28.30" height="28.30" fill="#e9e9e9"/><rect x="113.00" y="18.50" width="28.55" height="28.30" fill="#e5e5e5"/><rect x="141.25" y="18.50" width="28.55" height="28.30" fill="#e5e5e5"/><rect x="169.50" y="18.50" width="11.80" height="28.30" fill="#f4f4f4"/><rect x="0.00" y="46.50" width="29.05" height="29.05" fill="#f1f1f1"/><rect x="28.75" y="46.50" width="27.80" height="29.05" fill="#f1f1f1"/><rect x="56.25" y="46.50" width="29.05" height="29.05" fill="#f2f2f2"/><rect x="85.00" y="46.50" width="28.30" height="29.05" fill="#f1f1f1"/><rect x="113.00" y="46.50" width="28.55" height="29.05" fill="#efefef"/><rect x="141.25" y="46.50" width="28.55" height="29.05" fill="#efefef"/><rect x="169.50" y="46.50" width="11.80" height="29.05" fill="#f6f6f6"/><rect x="0.00" y="75.25" width="29.05" height="28.55" fill="#e6e6e6"/><rect x="28.75" y="75.25" width="27.80" height="28.55" fill="#e7e7e7"/><rect x="56.25" y="75.25" width="29.05" height="28.55" fill="#e9e9e9"/><rect x="85.00" y="75.25" width="28.30" height="28.55" fill="#e7e7e7"/><rect x="113.00" y="75.25" width="28.55" height="28.55" fill="#e3e3e3"/><rect x="141.25" y="75.25" width="28.55" height="28.55" fill="#e3e3e3"/><rect x="169.50" y="75.25" width="11.80" height="28.55" fill="#f2f2f2"/><rect x="0.00" y="103.50" width="29.05" height="28.55" fill="#f2f2f2"/><rect x="28.75" y="103.50" width="27.80" height="28.55" fill="#f2f2f2"/><rect x="56.25" y="103.50" width="29.05" height="28.55" fill="#f3f3f3"/><rect x="85.00" y="103.50" width="28.30" height="28.55" fill="#f2f2f2"/><rect x="113.00" y="103.50" width="28.55" height="28.55" fill="#f0f0f0"/><rect x="141.25" y="103.50" width="28.55" height="28.55" fill="#f0f0f0"/><rect x="169.50" y="103.50" width="11.80" height="28.55" fill="#f7f7f7"/><rect x="0.00" y="131.75" width="29.05" height="28.55" fill="#e4e4e4"/><rect x="28.75" y="131.75" width="27.80" height="28.55" fill="#e5e5e5"/><rect x="56.25" y="131.75" width="29.05" height="28.55" fill="#e7e7e7"/><rect x="85.00" y="131.75" width="28.30" height="28.55" fill="#e5e5e5"/><rect x="113.00" y="131.75" width="28.55" height="28.55" fill="#e1e1e1"/><rect x="141.25" y="131.75" width="28.55" height="28.55" fill="#e1e1e1"/><rect x="169.50" y="131.75" width="11.80" height="28.55" fill="#f0f0f0"/><rect x="0.00" y="160.00" width="29.05" height="28.80" fill="#f5f5f5"/><rect x="28.75" y="160.00" width="27.80" height="28.80" fill="#f5f5f5"/><rect x="56.25" y="160.00" width="29.05" height="28.80" fill="#f6f6f6"/><rect x="85.00" y="160.00" width="28.30" height="28.80" fill="#f5f5f5"/><rect x="113.00" y="160.00" width="28.55" height="28.80" fill="#f3f3f3"/><rect x="141.25" y="160.00" width="28.55" height="28.80" fill="#f3f3f3"/><rect x="169.50" y="160.00" width="11.80" height="28.80" fill="#fafafa"/><rect x="0.00" y="188.50" width="29.05" height="28.80" fill="#e2e2e2"/><rect x="28.75" y="188.50" width="27.80" height="28.80" fill="#e3e3e3"/><rect x="56.25" y="188.50" width="29.05" height="28.80" fill="#e5e5e5"/><rect x="85.00" y="188.50" width="28.30" height="28.80" fill="#e3e3e3"/><rect x="113.00" y="188.50" width="28.55" height="28.80" fill="#dfdfdf"/><rect x="141.25" y="188.50" width="28.55" height="28.80" fill="#dfdfdf"/><rect x="169.50" y="188.50" width="11.80" height="28.80" fill="#eeeeee"/><rect x="0.00" y="217.00" width="29.05" height="28.80" fill="#f4f4f4"/><rect x="28.75" y="217.00" width="27.80" height="28.80" fill="#f4f4f4"/><rect x="56.25" y="217.00" width="29.05" height="28.80" fill="#f5f5f5"/><rect x="85.00" y="217.00" width="28.30" height="28.80" fill="#f4f4f4"/><rect x="113.00" y="217.00" width="28.55" height="28.80" fill="#f2f2f2"/><rect x="141.25" y="217.00" width="28.55" height="28.80" fill="#f2f2f2"/><rect x="169.50" y="217.00" width="11.80" height="28.80" fill="#f9f9f9"/><rect x="0.00" y="245.50" width="29.05" height="14.80" fill="#dfdfdf"/><rect x="28.75" y="245.50" width="27.80" height="14.80" fill="#e0e0e0"/><rect x="56.25" y="245.50" width="29.05" height="14.80" fill="#e2e2e2"/><rect x="85.00" y="245.50" width="28.30" height="14.80" fill="#e0e0e0"/><rect x="113.00" y="245.50" width="28.55" height="14.80" fill="#dcdcdc"/><rect x="141.25" y="245.50" width="28.55" height="14.80" fill="#dcdcdc"/><rect x="169.50" y="245.50" width="11.80" height="14.80" fill="#ebebeb"/></svg>
<span class="t" style="left:1602.80px;top:1370px;font-size:21.6px;color:#6c757d;letter-spacing:-0.312px;">SHOW MORE</span></section>
</main></body></html>
